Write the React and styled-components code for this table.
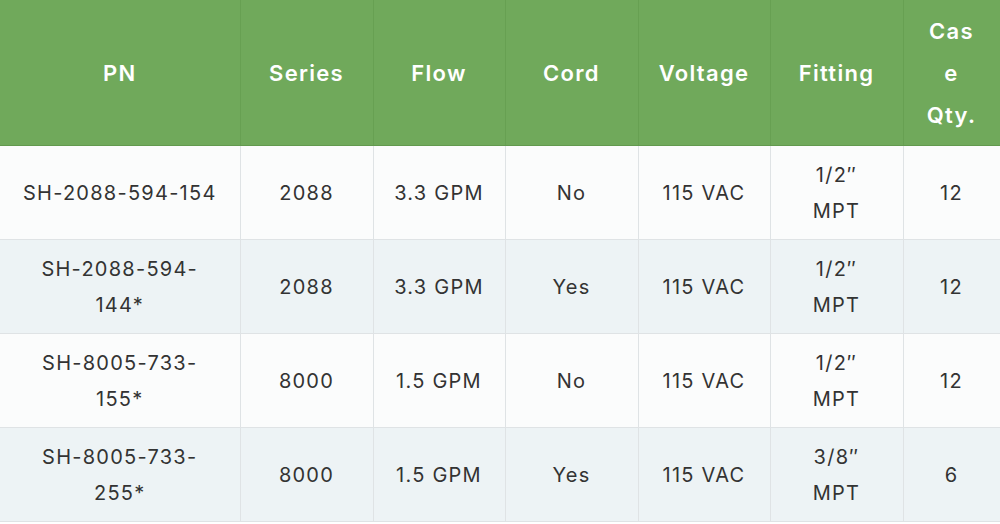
import React from 'react'
import styled, { createGlobalStyle } from 'styled-components'

const GlobalStyle = createGlobalStyle`
  html, body {
    margin: 0;
    padding: 0;
    background: #ffffff;
  }
  body {
    font-family: Inter, "Liberation Sans", Arial, sans-serif;
  }
`

const Table = styled.table`
  width: 1000px;
  border-collapse: collapse;
  table-layout: fixed;
  color: #333333;
`

const HeadCell = styled.th`
  width: ${({ w }) => w}px;
  background: #70a95b;
  color: #ffffff;
  font-size: 22px;
  font-weight: 600;
  letter-spacing: 1.3px;
  line-height: 42px;
  height: 145px;
  box-sizing: border-box;
  padding: 9.5px ${({ pad }) => pad}px;
  text-align: center;
  vertical-align: middle;
  overflow-wrap: anywhere;
  border-right: 1px solid #67a052;
  border-bottom: 1px solid #62994e;
  &:last-child {
    border-right: 1px solid #e2e6e8;
  }
`

const Row = styled.tr`
  background: ${({ alt }) => (alt ? '#edf3f5' : '#fbfcfc')};
`

const Cell = styled.td`
  font-size: 20px;
  letter-spacing: 1.25px;
  line-height: 36px;
  height: 94px;
  box-sizing: border-box;
  padding: 10px 20px;
  text-align: center;
  vertical-align: middle;
  border-right: 1px solid #dfe3e5;
  border-bottom: 1px solid #dfe3e5;
`

const columns = [
  { label: 'PN', w: 240, pad: 18 },
  { label: 'Series', w: 133, pad: 18 },
  { label: 'Flow', w: 132, pad: 18 },
  { label: 'Cord', w: 133, pad: 18 },
  { label: 'Voltage', w: 132, pad: 18 },
  { label: 'Fitting', w: 133, pad: 18 },
  { label: 'Case Qty.', w: 97, pad: 22 },
]

const rows = [
  ['SH-2088-594-154', '2088', '3.3 GPM', 'No', '115 VAC', '1/2″ MPT', '12'],
  ['SH-2088-594-144*', '2088', '3.3 GPM', 'Yes', '115 VAC', '1/2″ MPT', '12'],
  ['SH-8005-733-155*', '8000', '1.5 GPM', 'No', '115 VAC', '1/2″ MPT', '12'],
  ['SH-8005-733-255*', '8000', '1.5 GPM', 'Yes', '115 VAC', '3/8″ MPT', '6'],
]

export default function App() {
  return (
    <>
      <GlobalStyle />
      <Table>
        <thead>
          <tr>
            {columns.map((c) => (
              <HeadCell key={c.label} w={c.w} pad={c.pad}>{c.label}</HeadCell>
            ))}
          </tr>
        </thead>
        <tbody>
          {rows.map((r, i) => (
            <Row key={i} alt={i % 2 === 1}>
              {r.map((v, j) => (
                <Cell key={j}>{v}</Cell>
              ))}
            </Row>
          ))}
        </tbody>
      </Table>
    </>
  )
}
